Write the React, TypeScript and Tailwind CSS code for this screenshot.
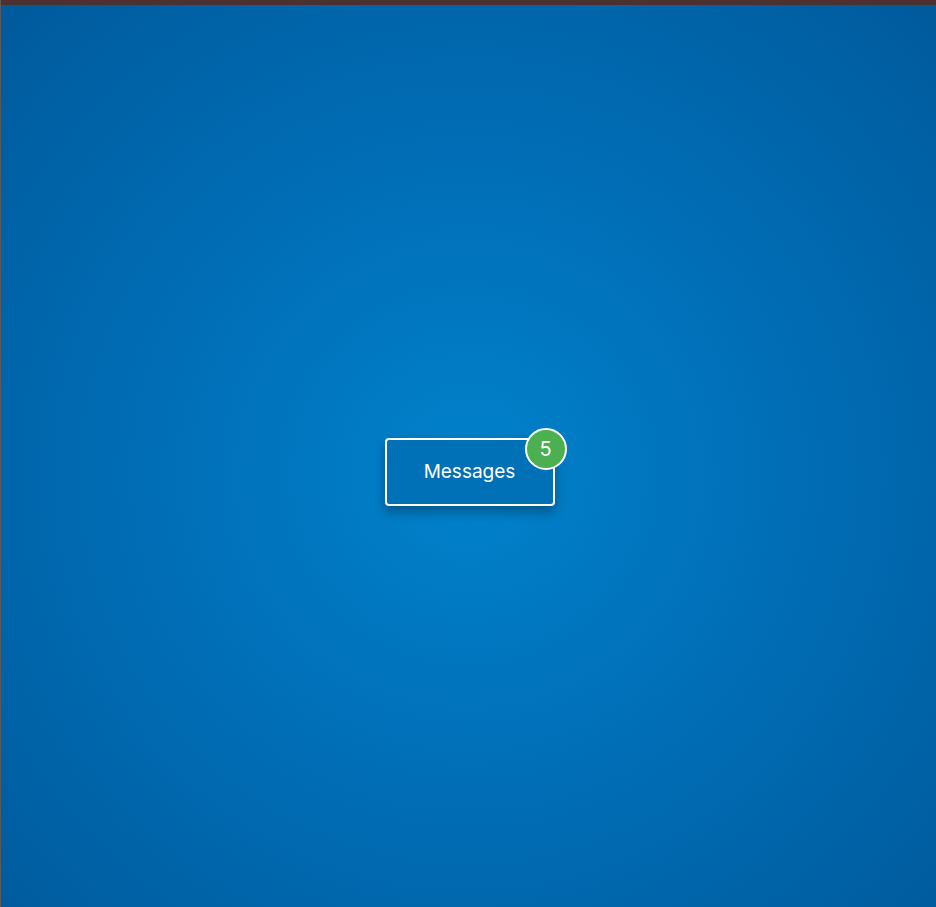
export default function App() {
  return (
    <div className="h-[907px] w-[936px] flex flex-col bg-[#5a5a5a] pl-px overflow-hidden">
      <div className="h-[5px] bg-[#4d3130]" />
      <div className="flex-1 flex items-center justify-center bg-[radial-gradient(circle_at_50%_52%,#0082cb_0%,#006fb8_45%,#005a9c_100%)]">
        <div className="relative mt-[32px] ml-[2px]">
          <button className="w-[170px] h-[68px] rounded-[4px] border-2 border-white bg-[#0071b6] text-white text-[19px] font-[Inter,'Open_Sans',sans-serif] shadow-[0_6px_12px_rgba(0,0,0,0.3)]">
            Messages
          </button>
          <span className="absolute -top-[10px] -right-[12px] w-[42px] h-[42px] rounded-full bg-[#4caf50] border-2 border-white flex items-center justify-center text-white text-[20px] font-[Inter,sans-serif]">
            5
          </span>
        </div>
      </div>
    </div>
  )
}
